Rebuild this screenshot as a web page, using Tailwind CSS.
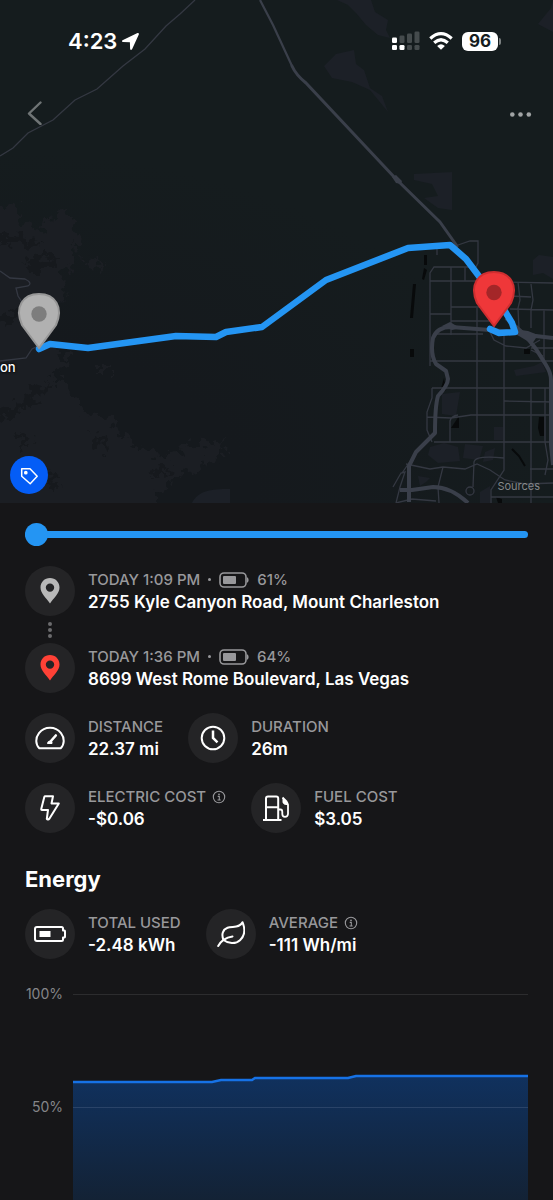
<!DOCTYPE html>
<html lang="en">
<head>
<meta charset="utf-8">
<meta name="viewport" content="width=device-width, initial-scale=1">
<title>Trip details</title>
<script src="https://cdn.jsdelivr.net/npm/@tailwindcss/browser@4"></script>
</head>
<body class="bg-[#161618] font-[Inter,'Liberation_Sans',sans-serif] text-white">

<!-- Shared icons -->
<svg class="hidden" aria-hidden="true">
  <symbol id="pin" viewBox="0 0 20 26"><path fill-rule="evenodd" d="M10 0C4.500 0 .5 4.200.5 9.400.5 15.500 6.500 20 10 25.500 13.500 20 19.500 15.500 19.500 9.400 19.500 4.200 15.500 0 10 0Zm0 13.800a4.200 4.200 0 1 1 0-8.400 4.200 4.200 0 0 1 0 8.400Z" fill="currentColor"/></symbol>
  <symbol id="cell" viewBox="0 0 30 16"><rect x="1" y="1" width="26" height="14" rx="4" fill="none" stroke="currentColor" stroke-width="1.600"/><rect x="4" y="4" width="13" height="8" rx="1" fill="currentColor"/><path d="M28 5.200c1.300.6 1.600 1.600 1.600 2.800s-.3 2.200-1.600 2.800Z" fill="currentColor"/></symbol>
  <symbol id="info" viewBox="0 0 14 14"><circle cx="7" cy="7" r="5.700" fill="none" stroke="currentColor" stroke-width="1.100"/><circle cx="7" cy="4.300" r=".9" fill="currentColor"/><path d="M5.700 6.400H7.300V10M5.500 10H8.700" fill="none" stroke="currentColor" stroke-width="1.100"/></symbol>
</svg>

<section class="relative h-[503px] overflow-hidden bg-[#151c1e]" aria-label="Trip map">
  <svg class="absolute inset-0 h-full w-full" viewBox="0 0 553 503" preserveAspectRatio="xMidYMid slice" aria-hidden="true">
    <defs>
      <radialGradient id="shade" cx="0" cy="1" r="1"><stop offset=".45" stop-color="#15191d"/><stop offset="1" stop-color="#15191d" stop-opacity="0"/></radialGradient>
      <filter id="rough" x="-5%" y="-5%" width="110%" height="110%" color-interpolation-filters="sRGB"><feTurbulence type="fractalNoise" baseFrequency=".12" numOctaves="3" seed="4"/><feDisplacementMap in="SourceGraphic" scale="26" xChannelSelector="R" yChannelSelector="G"/></filter>
    </defs>
    <rect width="553" height="503" fill="#151c1e"/>
    <rect y="150" width="553" height="353" fill="url(#shade)"/>
    <!-- Mountain terrain -->
    <g filter="url(#rough)">
      <path fill="#1b1e23" d="M-20 200 16 206 24 222 40 230 50 216 68 210 76 236 74 258 62 276 66 296 52 310 50 345 70 358 68 368 50 376 72 388 84 412 112 420 134 446 166 458 190 444 224 440 222 456 196 470 168 480 148 515H-20ZM96 366h12v6H96ZM82 258 106 260 100 270 84 266Z"/>
      <path fill="#16191d" d="M-10 412 20 402 34 388 50 382 38 396 24 410 4 420ZM16 432l12 4 4 12-12-4ZM0 232l24 4 20 8-20 2-24-4ZM20 262l30-6 14 4-24 12ZM0 318l18-10 4 8-18 14ZM50 470l10 6-6 12-8-6ZM92 430l14 10 4 12-14-8ZM150 470l24-4-4 8-18 4Z"/>
    </g>
    <g fill="#1c2027">
      <path d="M337 0h34l4 12 13 8-2 10 4 8-12-3-12-10-10-12-8-8ZM324 66l12-12 18-4 2 14 8 6 6 18 12 8 6 16-18-22-18-8-20-4ZM414 174l38-2v38l-14-2-14-10 14-2-6-12-18-4ZM553 0v32l-15-8 13-16Z"/>
      <path d="M192 503c6-12 18-14 38-14v14ZM533 260l6-5 14 2v22l-10-6-10 2Z"/>
      <path d="M442 394l18-2-4 24-14-2ZM465 444l18 2-4 14-16-2ZM494 427h9v13h-9ZM430 447l14-4 14 4 2 14-22 2-10-8ZM485 452l10-4-2 12-10 2ZM514 370l20-4 8-4 4 10-30 4ZM418 476l12 2-4 4-6 4ZM480 492l10-6v17h-10Z"/>
    </g>
    <g fill="#080a0b">
      <path d="M424 255h3v10h-3ZM424 268l3 2-3 10-2-1ZM413 284h3l-3 34h-3ZM410 349h4v8h-4ZM444 378l2 12-7 5ZM459 416v12h-8ZM539 417h5v19h-4l-2-8ZM524 349h6v5h-6ZM496 497l6 2v4h-4Z"/>
      <path d="M512 449l7 7 6 10" stroke="#080a0b" stroke-width="2" fill="none"/>
    </g>
    <!-- Minor roads -->
    <g fill="none" stroke="#343842" stroke-width="1.300">
      <path d="M195 0 180 14 166 26 145 49 123 66 97 89 75 100 53 120 28 133 13 148 0 156"/>
      <path d="M0 271l10 7 15 1q8 4 3 7l-12 2 2 8 4 6M0 361l26-3 6-9 8-4"/>
      <path d="M458 245l12-4h8v22l-2 4M437 248v7M430 366v-93l4-6h40M451 267v68M465 267v14M430 281h54M504 282l49 1M451 307h34M430 314h21M451 321h40M433 334h50M430 361h123M477 308v134M504 330v140l-13 20v13M518 282l2 18-2 8 1 22M531 284l2 16-2 10v18M510 296l21 1M510 309l43 1M544 310v50M531 348h22M490 332l4 8 12 6 20 2 14-8M531 350l12 6"/>
      <path d="M432 388h121M504 401l49 1M427 417l24 1 20-3h82M434 442h119M530 469h23M450 442v-21q1-5 8-6M432 388v10l-5 14v18l5 12M531 388v115M545 388v54l3 18-3 15M406 464l24 5 13-2 22 2 12-5 13 6 15 10 20 4 28-1M473 487l1-25q1-7 30-4M443 467l-5 20 1 16M491 497h62M393 487l8-14 4-1-5 15-4 16M402 473l14-20M396 503l16-4 24 2"/>
      <circle cx="470" cy="491" r="4"/>
    </g>
    <!-- Highways -->
    <g fill="none" stroke="#3a3f4a" stroke-linejoin="round">
      <path stroke-width="2.200" d="M260 0 273 25 292 66"/>
      <path stroke-width="3" stroke-linecap="round" d="M292 66q4 9 14 17L396 179 440 222 457 246"/>
      <path stroke-width="4" d="M553 338l-26-3-14-3-23-2-39-3q-14 0-18 11-3 16 3 26l10 7 2 8q0 6-10 17-3 10-3 37l-19 19-7 14v36"/>
      <path stroke-width="4" d="M506 318l19 17 11 14 10 16q5 8 5 15v65l2 20M400 490l12 0 21-3q18 0 35 16"/>
    </g>
    <path d="M514 329l14 2 10 4-6 9-8-5-10-6ZM392 177l4-2 6 6-1 3-5-1ZM442 326l8-4 10 6-8 2Z" fill="#3a3f4a"/>
    <!-- Driven route -->
    <path d="M39 349l11-5 38 4 88-12 40 1 10-5 36-5 64-47 82-32 42-3 16 14 37 49 9 15 3 9-16 1-9-4" fill="none" stroke="#2495f3" stroke-width="6.500" stroke-linecap="round" stroke-linejoin="round"/>
    <g stroke-width="2">
      <path d="M39 348 22 325c-8-18 1-31 17-31s25 13 17 31Z" fill="#b1b1b1" stroke="#979797"/>
      <circle cx="39" cy="314" r="7.700" fill="#7d7d7d"/>
      <path d="M494 326 477 303c-8-18 1-31 17-31s25 13 17 31Z" fill="#ef3739" stroke="#cf2e30"/>
      <circle cx="494" cy="292.500" r="7.700" fill="#a42628"/>
    </g>
  </svg>

  <div class="relative flex h-full flex-col">
    <div class="flex h-[82px] items-center justify-between pr-[52px] pl-[68px]">
      <div class="flex items-center gap-1">
        <time class="text-[22px] leading-7 font-semibold">4:23</time>
        <svg class="size-[19px]" viewBox="0 0 19 19" role="img" aria-label="Location in use"><path d="M2 8 16.500 1.100Q18.300.7 17.800 2.600L11.200 17q-1.500 2-2.100-.3L8.900 10.300 2.100 10.100Q-.2 9.300 2 8Z" fill="#fff"/></svg>
      </div>
      <div class="flex items-center gap-[9px]">
        <svg class="h-5 w-[29px]" viewBox="0 0 29 20" role="img" aria-label="Signal">
          <g fill="#fff"><rect x="1" y="6.500" width="5" height="5.500" rx="1.300"/><rect x="1" y="14" width="5" height="5" rx="1.300"/><rect x="8.500" y="14" width="5" height="5" rx="1.300"/></g>
          <g fill="#454b4d"><rect x="8.500" y="4.500" width="5" height="7.500" rx="1.300"/><rect x="16" y="2.500" width="5" height="9.500" rx="1.300"/><rect x="23.500" y=".5" width="5" height="11.500" rx="1.300"/><rect x="16" y="14" width="5" height="5" rx="1.300"/><rect x="23.500" y="14" width="5" height="5" rx="1.300"/></g>
        </svg>
        <svg class="h-[18px] w-6" viewBox="0 0 24 18" role="img" aria-label="Wi-Fi"><g fill="none" stroke="#fff" stroke-width="3.200"><path d="M1.300 6.500Q12-3.100 22.700 6.500M5.200 10.800Q12 4.700 18.800 10.800"/></g><path d="M12 17.800 8.100 13.900Q12 10.800 15.900 13.900Z" fill="#fff"/></svg>
        <div class="flex items-center gap-px">
          <span class="w-9 rounded-md bg-white text-center text-[17px] leading-[19px] font-bold text-[#151c1e]">96</span>
          <span class="h-[7px] w-0.5 rounded-r-full bg-[#7b8081]"></span>
        </div>
      </div>
    </div>
    <div class="flex h-[62px] items-center justify-between pr-[21px] pl-[25px]">
      <button type="button" aria-label="Back" class="text-[#6f7475]"><svg class="h-6 w-5" viewBox="0 0 20 24" fill="none" stroke="currentColor" stroke-width="2.400" stroke-linecap="round" stroke-linejoin="round"><path d="M15.500 1.500 4 12.500 15.500 23"/></svg></button>
      <button type="button" aria-label="More options" class="text-[#a1a4a5]"><svg class="h-6 w-[23px]" viewBox="0 0 23 24" fill="currentColor"><circle cx="3.300" cy="13.500" r="2.300"/><circle cx="11.500" cy="13.500" r="2.300"/><circle cx="19.800" cy="13.500" r="2.300"/></svg></button>
    </div>
    <p class="mt-[215px] h-4 text-[13px] leading-4 font-medium [text-shadow:0_0_3px_#000,0_0_2px_#000]">on</p>
    <div class="mt-auto flex items-end justify-between pr-[13px] pb-[9px] pl-[10px]">
      <button type="button" aria-label="Tag trip" class="grid size-[38px] place-items-center rounded-full bg-[#045df6]"><svg class="size-5" viewBox="0 0 20 20" fill="none" stroke="#fff" stroke-width="1.500" stroke-linejoin="round"><path d="M2.700 3.700H11L18.200 11.300 11.200 18.700 2.700 11.200Z"/><circle cx="6.800" cy="7.700" r="1.100" fill="#fff"/></svg></button>
      <a href="#" class="text-[11px] leading-4 text-[#85888b]">Sources</a>
    </div>
  </div>
</section>

<main class="px-[25px]">
  <div class="flex h-[63px] items-center">
    <input type="range" min="0" max="100" value="0" aria-label="Trip position" class="h-[7px] w-full appearance-none rounded-full bg-[#2495f3] [&::-webkit-slider-thumb]:size-[23px] [&::-webkit-slider-thumb]:appearance-none [&::-webkit-slider-thumb]:rounded-full [&::-webkit-slider-thumb]:bg-[#2495f3]">
  </div>

  <!-- Start and end points -->
  <div class="flex items-center gap-[13px]">
    <div class="grid size-[50px] shrink-0 place-items-center rounded-full bg-[#242426] text-[#b8b8b8]"><svg class="h-[26px] w-5" aria-hidden="true"><use href="#pin"/></svg></div>
    <div class="leading-[23px]">
      <p class="flex items-center gap-2 text-[15px] font-medium text-[#98989b]">TODAY 1:09 PM <span class="size-[3px] rounded-full bg-current" aria-hidden="true"></span><svg class="h-4 w-[30px]" aria-hidden="true"><use href="#cell"/></svg><span>61%</span></p>
      <p class="text-[17px] font-semibold">2755 Kyle Canyon Road, Mount Charleston</p>
    </div>
  </div>
  <div class="flex h-[27px] w-[50px] flex-col items-center justify-center gap-0.5" aria-hidden="true">
    <span class="size-1 rounded-full bg-[#6b6b6d]"></span><span class="size-1 rounded-full bg-[#6b6b6d]"></span><span class="size-1 rounded-full bg-[#6b6b6d]"></span>
  </div>
  <div class="flex items-center gap-[13px]">
    <div class="grid size-[50px] shrink-0 place-items-center rounded-full bg-[#242426] text-[#ff4136]"><svg class="h-[26px] w-5" aria-hidden="true"><use href="#pin"/></svg></div>
    <div class="leading-[23px]">
      <p class="flex items-center gap-2 text-[15px] font-medium text-[#98989b]">TODAY 1:36 PM <span class="size-[3px] rounded-full bg-current" aria-hidden="true"></span><svg class="h-4 w-[30px]" aria-hidden="true"><use href="#cell"/></svg><span>64%</span></p>
      <p class="text-[17px] font-semibold">8699 West Rome Boulevard, Las Vegas</p>
    </div>
  </div>

  <!-- Trip figures -->
  <dl class="mt-5 flex gap-[25px]">
    <div class="flex items-center gap-[13px]">
      <div class="grid size-[50px] shrink-0 place-items-center rounded-full bg-[#242426]"><svg class="h-6 w-[30px]" viewBox="0 0 30 24" fill="none" stroke="#fff" stroke-width="2" stroke-linejoin="round" aria-hidden="true"><path d="M4.300 22.200C.3 18 .3 12 4 7.200 9.600 0 20.400 0 26 7.200c3.700 4.800 3.700 10.800-.3 15Z"/><path d="M20.800 9.500 15.500 15.500" stroke-width="2.600" stroke-linecap="round"/><path d="M12.500 17.500q0-2.500 3-2.500 2 0 1.500 2.500Z" fill="#fff" stroke-width="1"/></svg></div>
      <div class="leading-[23px]"><dt class="text-[15px] font-medium text-[#98989b]">DISTANCE</dt><dd class="text-[17px] font-semibold">22.37 mi</dd></div>
    </div>
    <div class="flex items-center gap-[13px]">
      <div class="grid size-[50px] shrink-0 place-items-center rounded-full bg-[#242426]"><svg class="size-[26px]" viewBox="0 0 26 26" fill="none" stroke="#fff" stroke-width="2" aria-hidden="true"><circle cx="13" cy="13" r="11.300"/><path d="M13 5.500V13L17.500 17.300" stroke-width="2.500"/></svg></div>
      <div class="leading-[23px]"><dt class="text-[15px] font-medium text-[#98989b]">DURATION</dt><dd class="text-[17px] font-semibold">26m</dd></div>
    </div>
  </dl>
  <dl class="mt-5 flex gap-[25px]">
    <div class="flex items-center gap-[13px]">
      <div class="grid size-[50px] shrink-0 place-items-center rounded-full bg-[#242426]"><svg class="h-[26px] w-5" viewBox="0 0 20 26" fill="none" stroke="#fff" stroke-width="2" stroke-linejoin="round" aria-hidden="true"><path d="M5.300 1.300H13L11.500 8.500H18.800L9.500 23.500Q7.800 25.400 6.800 24L8 15H2Q1 15 1.300 13.800L4.300 2Q4.500 1.300 5.300 1.300Z"/></svg></div>
      <div class="leading-[23px]"><dt class="flex items-center gap-1.5 text-[15px] font-medium text-[#98989b]">ELECTRIC COST <svg class="size-3.5" role="img" aria-label="More information"><use href="#info"/></svg></dt><dd class="text-[17px] font-semibold">-$0.06</dd></div>
    </div>
    <div class="flex items-center gap-[13px]">
      <div class="grid size-[50px] shrink-0 place-items-center rounded-full bg-[#242426]"><svg class="size-[26px]" viewBox="0 0 26 26" fill="none" stroke="#fff" stroke-width="2" stroke-linejoin="round" aria-hidden="true"><path d="M3 25V3.500Q3 1.500 5 1.500H13.200Q15.200 1.500 15.200 3.500V25M0 25H18.500M3 12.300H15.200"/><path d="M15.200 14.500H17.500Q19.300 14.500 19.300 17V19Q19.300 21.800 22 21.800T25 19V10Q24.800 8.500 23.500 6.500L19.500 2.500" stroke-width="1.800"/><path d="M20 3.500V7.300Q20.500 9.200 22.500 9.500H25Z" fill="#fff" stroke-width="1"/></svg></div>
      <div class="leading-[23px]"><dt class="text-[15px] font-medium text-[#98989b]">FUEL COST</dt><dd class="text-[17px] font-semibold">$3.05</dd></div>
    </div>
  </dl>

  <h2 class="mt-8 text-[22px] leading-7 font-bold">Energy</h2>
  <dl class="mt-4 flex gap-[25px]">
    <div class="flex items-center gap-[13px]">
      <div class="grid size-[50px] shrink-0 place-items-center rounded-full bg-[#242426]"><svg class="h-4 w-8" viewBox="0 0 32 16" fill="none" stroke="#fff" stroke-width="2" stroke-linejoin="round" aria-hidden="true"><path d="M3 1H27.500Q29 1 29 2.500V4.500H30.500Q31 4.500 31 5.500V10.500Q31 11.500 30.500 11.500H29V13.500Q29 15 27.500 15H3Q1 15 1 13V3Q1 1 3 1Z"/><path d="M5.500 5H16.500V11H5.500Z" fill="#fff" stroke="none"/></svg></div>
      <div class="leading-[23px]"><dt class="text-[15px] font-medium text-[#98989b]">TOTAL USED</dt><dd class="text-[17px] font-semibold">-2.48 kWh</dd></div>
    </div>
    <div class="flex items-center gap-[13px]">
      <div class="grid size-[50px] shrink-0 place-items-center rounded-full bg-[#242426]"><svg class="h-[26px] w-7" viewBox="0 0 28 26" fill="none" stroke="#fff" stroke-width="2" stroke-linecap="round" stroke-linejoin="round" aria-hidden="true"><path d="M1.200 25Q5.500 17 15.500 15.500"/><path d="M6.500 19C4 13 6 8.500 10.500 6.800 15 5 23 7.500 25.500 1.200 28.500 8.500 27.500 15 23 19.200 18.500 23.500 11 22.500 6.500 19Z"/></svg></div>
      <div class="leading-[23px]"><dt class="flex items-center gap-1.5 text-[15px] font-medium text-[#98989b]">AVERAGE <svg class="size-3.5" role="img" aria-label="More information"><use href="#info"/></svg></dt><dd class="text-[17px] font-semibold">-111 Wh/mi</dd></div>
    </div>
  </dl>

  <!-- Battery level over the trip -->
  <figure class="mt-[27px] flex gap-[10px]" aria-label="Battery level chart">
    <div class="flex w-[38px] shrink-0 flex-col gap-[97px] text-right text-[14px] leading-4 text-[#858588]"><span>100%</span><span>50%</span></div>
    <svg class="mt-2 h-[206px] min-w-0 flex-1" viewBox="0 0 455 206" preserveAspectRatio="none" aria-hidden="true">
      <defs><linearGradient id="level" x1="0" y1="0" x2="0" y2="1"><stop offset="0" stop-color="#10315e"/><stop offset="1" stop-color="#132235"/></linearGradient></defs>
      <path d="M0 88H139L148 86H179L182 84H275L283 82H455V206H0Z" fill="url(#level)"/>
      <path d="M0 .5H455" stroke="#2c2c2e"/>
      <path d="M0 113.500H455" stroke="#2a4368"/>
      <path d="M0 88H139L148 86H179L182 84H275L283 82H455" fill="none" stroke="#1672e6" stroke-width="2.500"/>
    </svg>
  </figure>
</main>
</body>
</html>
